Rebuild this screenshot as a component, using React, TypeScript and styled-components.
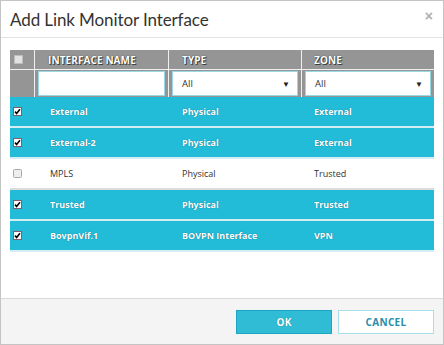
import React, { FC } from 'react';
import styled, { createGlobalStyle } from 'styled-components';

const GlobalStyle = createGlobalStyle`
    html, body {
        margin: 0;
        padding: 0;
        background: #ffffff;
    }
    * {
        box-sizing: border-box;
    }
`;

const Dialog = styled.div`
    width: 444px;
    height: 345px;
    border: 1px solid #c4c4c4;
    display: flex;
    flex-direction: column;
    background: #ffffff;
    font-family: 'Open Sans', 'Liberation Sans', sans-serif;
`;

const DialogHeader = styled.div`
    height: 37px;
    flex-shrink: 0;
    display: flex;
    align-items: center;
    justify-content: space-between;
    padding: 0 10px 0 9px;
    border-bottom: 1px solid #e3e3e3;
`;

const Title = styled.h1`
    margin: 0;
    font-family: 'Lato', 'Open Sans', sans-serif;
    font-weight: 400;
    font-size: 17px;
    color: #333333;
    letter-spacing: -0.1px;
`;

const CloseButton = styled.button`
    border: none;
    background: none;
    padding: 0;
    margin-top: -6px;
    font-family: 'Liberation Sans', sans-serif;
    font-size: 14px;
    font-weight: 700;
    color: #b0b0b0;
    line-height: 1;
`;

const DialogBody = styled.div`
    flex: 1;
    padding: 12px 9px 0 9px;
`;

const DialogFooter = styled.div`
    height: 46px;
    flex-shrink: 0;
    background: #f4f4f4;
    border-top: 1px solid #d9d9d9;
    display: flex;
    justify-content: flex-end;
    align-items: center;
    gap: 6px;
    padding: 0 9px 0 0;
`;

const Table = styled.div`
    width: 424px;
    display: flex;
    flex-direction: column;
`;

const HeadGrid = styled.div`
    display: grid;
    grid-template-columns: 24px 133px 132px 132px;
    gap: 1px;
    background: #f0f0f0;
`;

const HeadCell = styled.div<{ $pad?: number }>`
    height: 19px;
    background: #959595;
    display: flex;
    align-items: center;
    padding-left: ${(p) => p.$pad ?? 0}px;
    font-size: 10px;
    font-weight: 700;
    color: #ffffff;
    text-shadow: 0 0 1px #222, 1px 1px 0 #444;
    letter-spacing: 0.1px;
`;

const FilterCell = styled.div`
    height: 27px;
    background: #959595;
    display: flex;
    align-items: center;
    padding: 0 3px;
`;

const TextInput = styled.input`
    width: 100%;
    height: 25px;
    border: 1px solid #9ad8e6;
    background: #ffffff;
    outline: none;
`;

const Select = styled.div`
    width: 100%;
    height: 25px;
    border: 1px solid #9ad8e6;
    background: #ffffff;
    display: flex;
    align-items: center;
    justify-content: space-between;
    padding: 0 7px 0 9px;
    font-size: 9.5px;
    color: #333333;
`;

const Arrow = styled.span`
    font-size: 8px;
    color: #222222;
`;

const Row = styled.div<{ $selected: boolean }>`
    display: grid;
    grid-template-columns: 24px 133px 132px 132px;
    column-gap: 1px;
    height: 31px;
    align-items: center;
    background: ${(p) => (p.$selected ? '#22bcd9' : '#ffffff')};
    border-bottom: 2px solid ${(p) => (p.$selected ? '#d5eef4' : '#dcdcdc')};
    color: ${(p) => (p.$selected ? '#ffffff' : '#333333')};
    font-weight: ${(p) => (p.$selected ? 700 : 400)};
    text-shadow: ${(p) => (p.$selected ? '0 0 1px rgba(0, 40, 60, 0.6)' : 'none')};
    font-size: 9px;
`;

const Cell = styled.div<{ $pad: number }>`
    padding-left: ${(p) => p.$pad}px;
    white-space: nowrap;
`;

const BoxCell = styled.div`
    padding-left: 3px;
    display: flex;
    align-items: center;
`;

const Button = styled.button<{ $primary?: boolean }>`
    width: 96px;
    height: 24px;
    font-family: 'Open Sans', sans-serif;
    font-size: 10px;
    font-weight: 700;
    letter-spacing: 0.3px;
    background: ${(p) => (p.$primary ? '#2fbcd4' : '#ffffff')};
    border: 1px solid ${(p) => (p.$primary ? '#1aa6c2' : '#a6e0ec')};
    color: ${(p) => (p.$primary ? '#ffffff' : '#2a8ea8')};
    text-shadow: ${(p) => (p.$primary ? '0 0 1px rgba(0, 60, 80, 0.6)' : 'none')};
`;

const CheckBox: FC<{ checked: boolean; variant?: 'head' | 'row' }> = ({ checked, variant = 'row' }) => {
    if (variant === 'head') {
        return (
            <svg width="9" height="9" viewBox="0 0 9 9">
                <rect x="0.5" y="0.5" width="8" height="8" fill="#e2e2e2" stroke="#bdbdbd" />
            </svg>
        );
    }
    if (!checked) {
        return (
            <svg width="9" height="9" viewBox="0 0 9 9">
                <rect x="0.5" y="0.5" width="8" height="8" rx="1" fill="#eeeeee" stroke="#a8a8a8" />
            </svg>
        );
    }
    return (
        <svg width="9" height="9" viewBox="0 0 9 9">
            <rect x="0.5" y="0.5" width="8" height="8" fill="#ffffff" stroke="#8a5a6a" />
            <path d="M2 4.6 L3.6 6.4 L7 2.2" fill="none" stroke="#000000" strokeWidth="1.6" />
        </svg>
    );
};

const rows = [
    { name: 'External', type: 'Physical', zone: 'External', selected: true },
    { name: 'External-2', type: 'Physical', zone: 'External', selected: true },
    { name: 'MPLS', type: 'Physical', zone: 'Trusted', selected: false },
    { name: 'Trusted', type: 'Physical', zone: 'Trusted', selected: true },
    { name: 'BovpnVif.1', type: 'BOVPN Interface', zone: 'VPN', selected: true },
];

const App: FC = () => {
    return (
        <>
            <GlobalStyle />
            <Dialog>
                <DialogHeader>
                    <Title>Add Link Monitor Interface</Title>
                    <CloseButton>×</CloseButton>
                </DialogHeader>
                <DialogBody>
                    <Table>
                        <HeadGrid>
                            <HeadCell $pad={4}>
                                <CheckBox checked={false} variant={'head'} />
                            </HeadCell>
                            <HeadCell $pad={13}>INTERFACE NAME</HeadCell>
                            <HeadCell $pad={13}>TYPE</HeadCell>
                            <HeadCell $pad={12}>ZONE</HeadCell>
                            <FilterCell />
                            <FilterCell>
                                <TextInput />
                            </FilterCell>
                            <FilterCell>
                                <Select>
                                    All<Arrow>▼</Arrow>
                                </Select>
                            </FilterCell>
                            <FilterCell>
                                <Select>
                                    All<Arrow>▼</Arrow>
                                </Select>
                            </FilterCell>
                        </HeadGrid>
                        {rows.map((row) => (
                            <Row key={row.name} $selected={row.selected}>
                                <BoxCell>
                                    <CheckBox checked={row.selected} />
                                </BoxCell>
                                <Cell $pad={15}>{row.name}</Cell>
                                <Cell $pad={13}>{row.type}</Cell>
                                <Cell $pad={12}>{row.zone}</Cell>
                            </Row>
                        ))}
                    </Table>
                </DialogBody>
                <DialogFooter>
                    <Button $primary>OK</Button>
                    <Button>CANCEL</Button>
                </DialogFooter>
            </Dialog>
        </>
    );
};

export default App;
